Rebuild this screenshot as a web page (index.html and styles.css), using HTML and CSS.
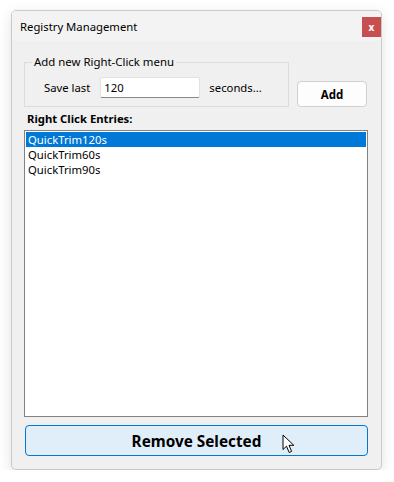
FILE: index.html
```html
<!DOCTYPE html>
<html lang="en">
<head>
  <meta charset="UTF-8">
  <title>Registry Management</title>
  <link rel="stylesheet" href="styles.css">
</head>
<body>
  <div class="window">
    <div class="titlebar">
      <span class="title">Registry Management</span>
      <div class="close">x</div>
    </div>

    <div class="content">
      <div class="top-row">
        <fieldset class="group">
          <legend>Add new Right-Click menu</legend>
          <div class="group-row">
            <span class="label">Save last</span>
            <input class="textbox" type="text" value="120">
            <span class="label">seconds...</span>
          </div>
        </fieldset>
        <button class="btn-add">Add</button>
      </div>

      <div class="list-label">Right Click Entries:</div>
      <div class="listbox">
        <div class="item selected">QuickTrim120s</div>
        <div class="item">QuickTrim60s</div>
        <div class="item">QuickTrim90s</div>
      </div>

      <button class="btn-remove">
        Remove Selected
        <svg class="cursor" width="13" height="20" viewBox="0 0 13 20">
          <path d="M1 1 L1 15.5 L4.5 12.2 L7.2 18.5 L9.6 17.4 L7 11.3 L11.8 11.3 Z" fill="#fff" stroke="#000" stroke-width="1" stroke-linejoin="round"/>
        </svg>
      </button>
    </div>
  </div>
</body>
</html>
```

FILE: styles.css
```css
body { margin: 0; background: #fff; font-family: "Noto Sans", sans-serif; font-size: 11.3px; color: #000; }
.window { margin: 10px 0 0 11px; width: 369px; height: 458px; background: #f0f0f0; border: 1px solid #c9c9c9; border-radius: 5px; box-shadow: 0 4px 14px rgba(0,0,0,0.12); display: flex; flex-direction: column; overflow: hidden; }
.titlebar { height: 30px; background: #f3f3f3; display: flex; align-items: center; justify-content: space-between; padding: 0 0 0 8px; }
.title { font-size: 11.3px; margin-top: 1px; }
.close { width: 19px; height: 20px; background: #c84f50; color: #fff; font-size: 10px; font-weight: bold; display: flex; align-items: center; justify-content: center; margin-top: 2px; }
.content { padding: 0 13px 0 12px; display: flex; flex-direction: column; flex: 1; }
.top-row { display: flex; align-items: flex-end; gap: 8px; margin-top: 13px; }
.group { margin: 0; padding: 0 0 8px 19px; width: 244px; border: 1px solid #dcdcdc; border-radius: 0; }
.group legend { padding: 0 2px; margin-left: -12px; font-size: 11.4px; line-height: 16px; }
.group-row { display: flex; align-items: center; margin-top: 7px; }
.label { font-size: 11.3px; }
.textbox { width: 92px; height: 19px; margin: 0 9px 0 10px; padding: 0 3px; border: 1px solid #e2e2e2; border-bottom-color: #888; border-radius: 2px; background: #fff; font-family: "Noto Sans", sans-serif; font-size: 11.3px; outline: none; }
.btn-add { width: 70px; height: 26px; background: #fdfdfd; border: 1px solid #d0d0d0; border-radius: 4px; font-family: "Noto Sans", sans-serif; font-weight: bold; font-size: 11.5px; padding: 0; }
.list-label { font-weight: bold; font-size: 11.3px; margin: 4px 0 3px 3px; line-height: 16px; }
.listbox { height: 283px; background: #fff; border: 1px solid #828282; padding: 1px; }
.item { height: 15px; line-height: 15px; padding-left: 2px; font-size: 11.3px; }
.item.selected { background: #0078d7; color: #fff; }
.btn-remove { position: relative; margin: 8px 0 0 1px; height: 31px; width: 343px; background: #e0eef9; border: 1px solid #0078d4; border-radius: 4px; font-family: "Noto Sans", sans-serif; font-weight: bold; font-size: 15.3px; padding: 0; }
.cursor { position: absolute; left: 256px; top: 8px; }
```
